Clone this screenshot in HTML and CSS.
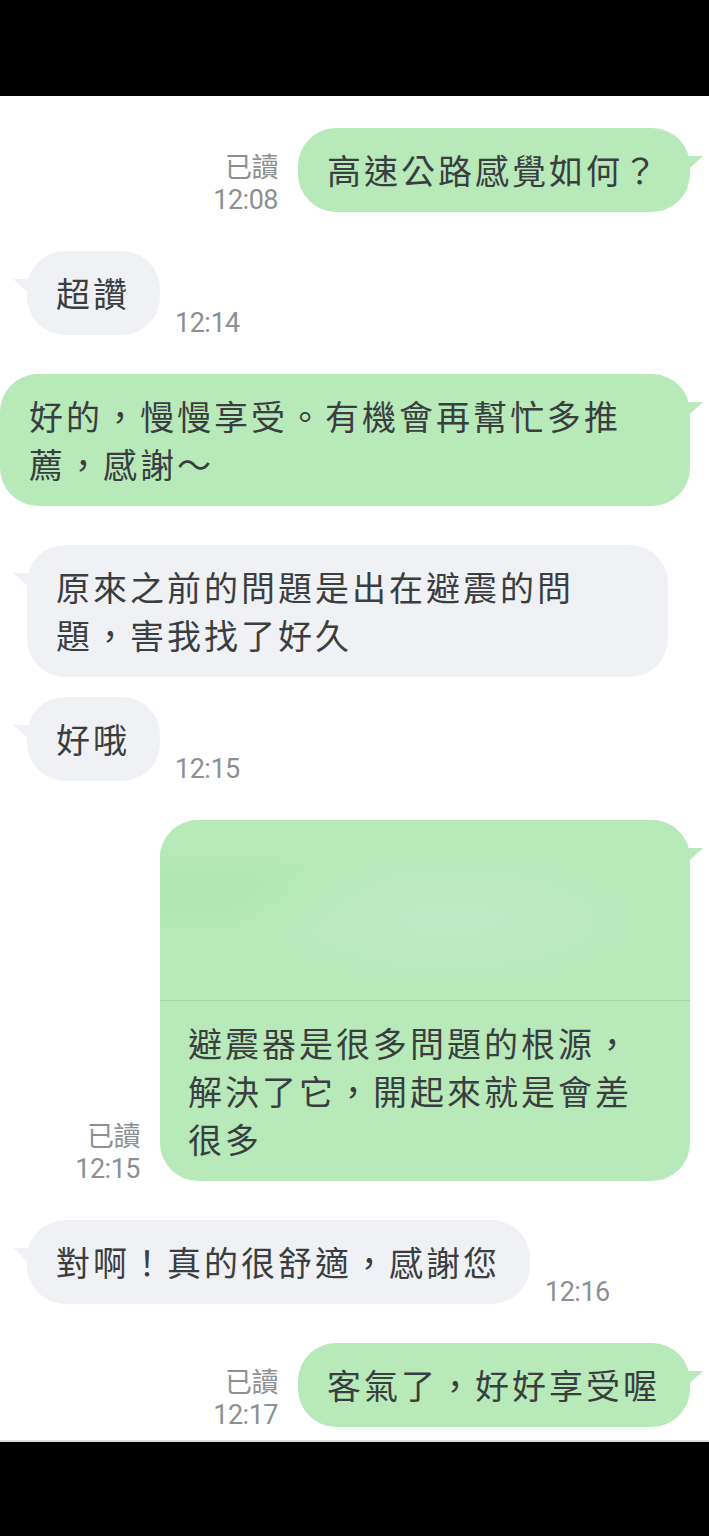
FILE: index.html
```html
<!DOCTYPE html>
<html lang="zh-Hant">
<head>
  <meta charset="UTF-8" />
  <meta name="viewport" content="width=device-width, initial-scale=1" />
  <title>聊天</title>
  <link rel="stylesheet" href="styles.css">
</head>
<body>
  <div class="bar top-bar"></div>

  <main class="chat">
    <div class="row mine">
      <div class="meta"><span>已讀</span><span>12:08</span></div>
      <div class="bubble">高速公路感覺如何？</div>
    </div>

    <div class="row theirs">
      <div class="bubble">超讚</div>
      <div class="meta"><span>12:14</span></div>
    </div>

    <div class="row mine">
      <div class="bubble full">好的，慢慢享受。有機會再幫忙多推<br>薦，感謝～</div>
    </div>

    <div class="row theirs">
      <div class="bubble long">原來之前的問題是出在避震的問<br>題，害我找了好久</div>
    </div>

    <div class="row theirs same">
      <div class="bubble">好哦</div>
      <div class="meta"><span>12:15</span></div>
    </div>

    <div class="row mine">
      <div class="meta"><span>已讀</span><span>12:15</span></div>
      <div class="bubble card">
        <div class="photo"></div>
        <div class="card-text">避震器是很多問題的根源，<br>解決了它，開起來就是會差<br>很多</div>
      </div>
    </div>

    <div class="row theirs">
      <div class="bubble">對啊！真的很舒適，感謝您</div>
      <div class="meta"><span>12:16</span></div>
    </div>

    <div class="row mine">
      <div class="meta"><span>已讀</span><span>12:17</span></div>
      <div class="bubble">客氣了，好好享受喔</div>
    </div>
  </main>

  <div class="bar bottom-bar"></div>
</body>
</html>
```

FILE: styles.css
```css
:root {
  --green: #b7e9b9;
  --grey: #eff1f4;
  --text: #3a3e40;
  --meta: #8b9095;
}

body {
  margin: 0;
  width: 709px;
  background: #000;
  font-family: "Noto Sans CJK TC", "Noto Sans", sans-serif;
  color: var(--text);
}

.bar {
  background: #000;
}

.top-bar {
  height: 96px;
}

.bottom-bar {
  height: 96px;
  border-top: 2px solid #dcdcdc;
  box-sizing: border-box;
}

.chat {
  background: #fff;
  height: 1344px;
  box-sizing: border-box;
  padding-top: 32px;
  display: flex;
  flex-direction: column;
}

.row {
  display: flex;
  align-items: flex-end;
  margin-top: 39px;
}

.row:first-child {
  margin-top: 0;
}

.row.same {
  margin-top: 20px;
}

.row.mine {
  justify-content: flex-end;
  padding-right: 19px;
  gap: 20px;
}

.row.theirs {
  justify-content: flex-start;
  padding-left: 27px;
  gap: 15px;
}

.bubble {
  position: relative;
  padding: 18px 30px 18px 29px;
  border-radius: 38px;
  font-size: 34px;
  letter-spacing: 3px;
  line-height: 48px;
  white-space: nowrap;
}

.mine .bubble {
  background: var(--green);
}

.theirs .bubble {
  background: var(--grey);
}

/* little tails */
.bubble::before {
  content: "";
  position: absolute;
  top: 28px;
  width: 24px;
  height: 22px;
}

.mine .bubble::before {
  right: -13px;
  background: var(--green);
  clip-path: polygon(0 0, 100% 0, 0 100%);
}

.theirs .bubble::before {
  left: -14px;
  background: var(--grey);
  clip-path: polygon(0 0, 100% 0, 100% 100%);
}

.bubble.full {
  width: 690px;
  box-sizing: border-box;
}

.bubble.long {
  width: 641px;
  box-sizing: border-box;
}

.bubble.card {
  width: 530px;
  box-sizing: border-box;
  padding: 0;
}

.photo {
  height: 180px;
  border-radius: 38px 38px 0 0;
  border-bottom: 1px solid #a5d6a8;
  background:
    radial-gradient(ellipse at 55% 55%, #bfecc4 0%, rgba(191, 236, 196, 0) 55%),
    radial-gradient(ellipse at 5% 40%, #afe7b0 0%, rgba(175, 231, 176, 0) 30%),
    var(--green);
}

.card-text {
  padding: 18px 28px;
}

.meta {
  display: flex;
  flex-direction: column;
  align-items: flex-end;
  font-family: Roboto, "Noto Sans CJK TC", sans-serif;
  font-size: 27px;
  letter-spacing: -0.5px;
  line-height: 32px;
  color: var(--meta);
  margin-bottom: -4px;
}

.theirs .meta {
  align-items: flex-start;
}
```
